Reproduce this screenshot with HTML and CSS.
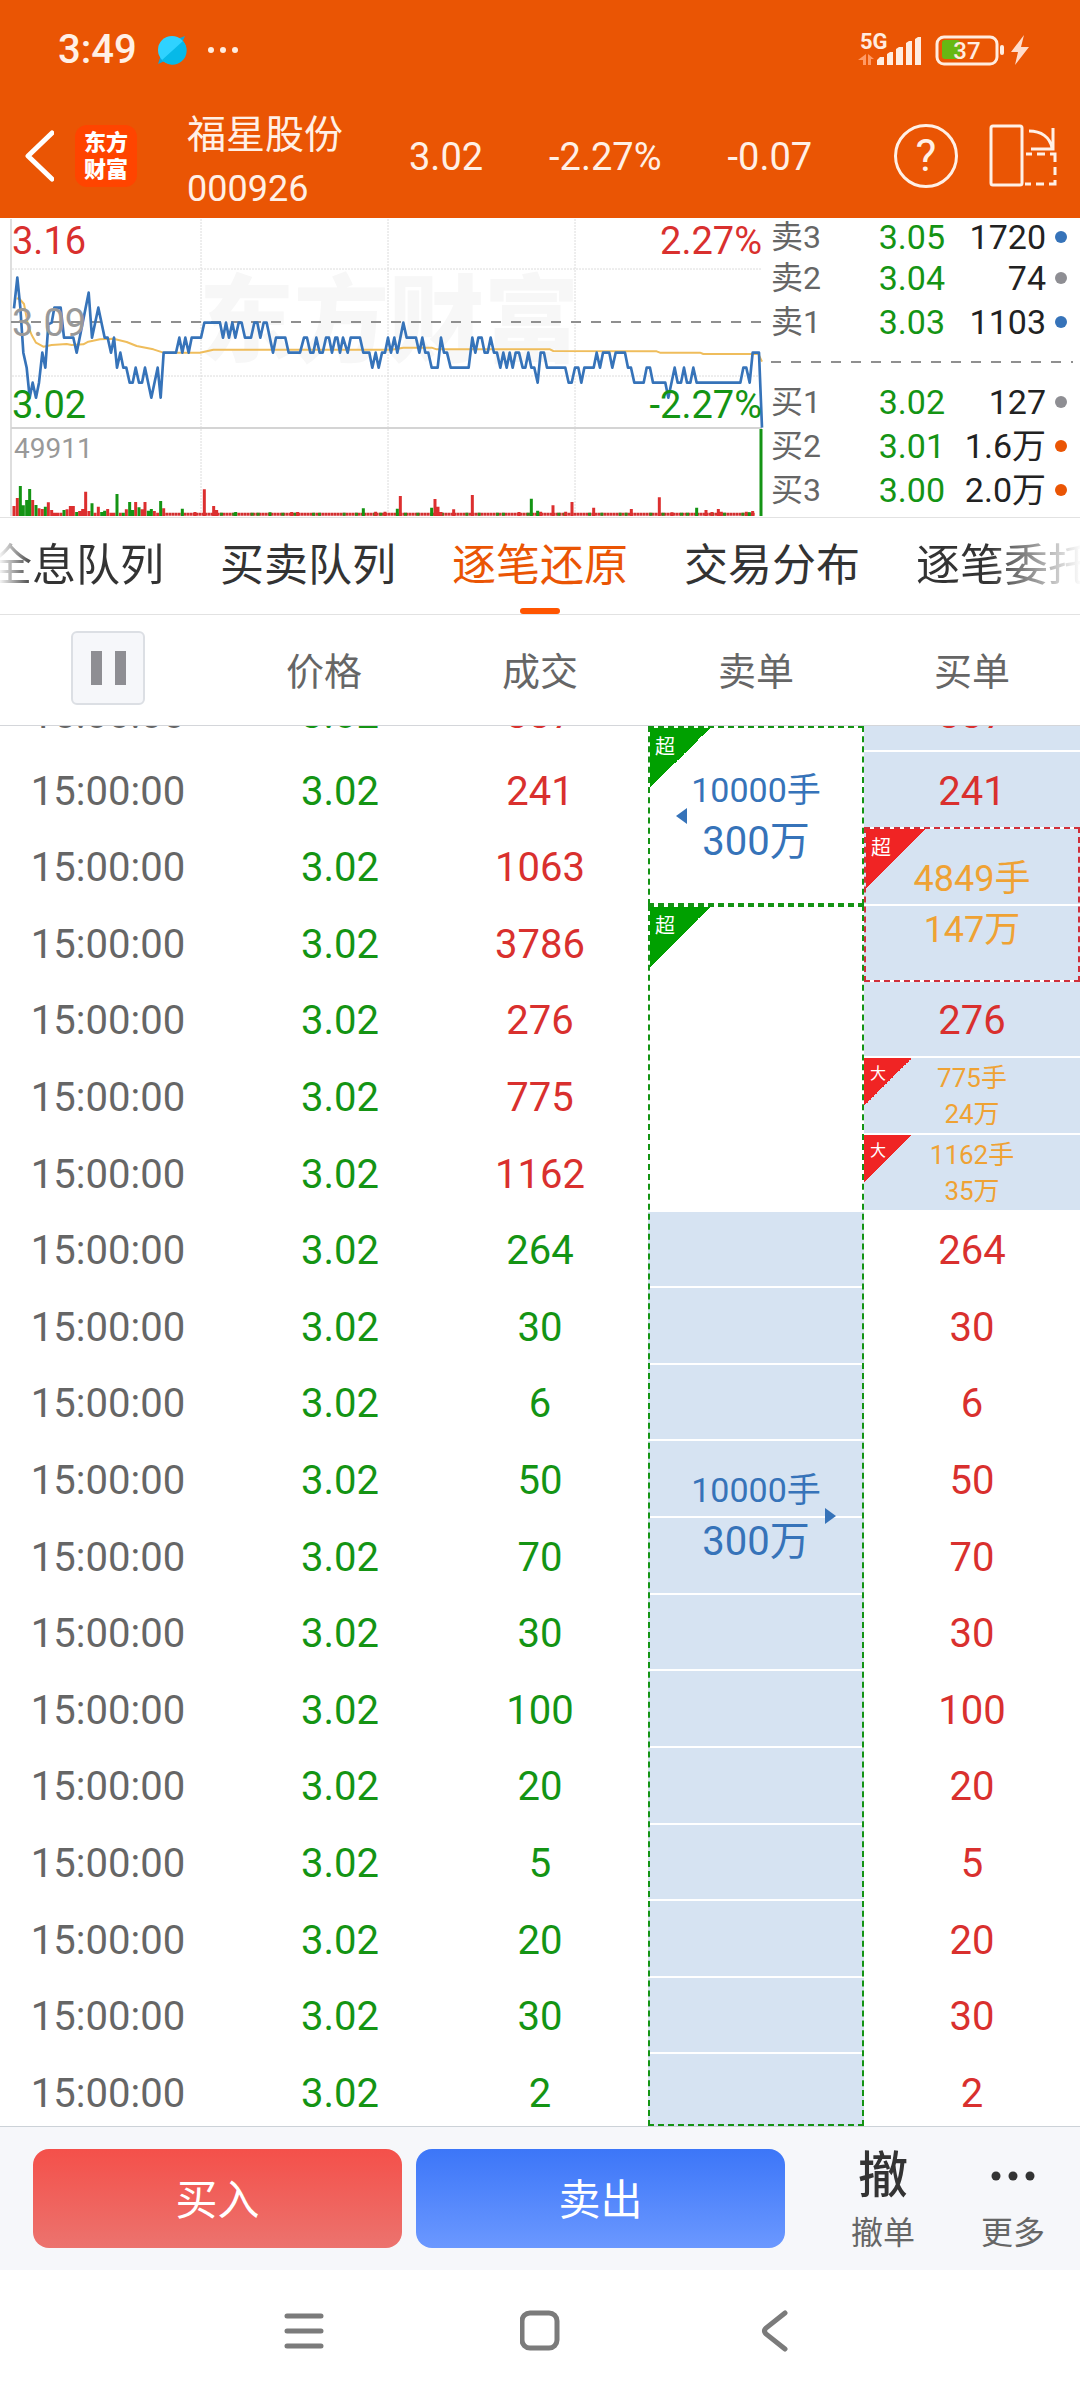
FILE: index.html
```html
<!DOCTYPE html>
<html lang="zh-CN">
<head>
<meta charset="utf-8">
<meta name="viewport" content="width=device-width, initial-scale=1">
<title>福星股份 000926</title>
<link rel="stylesheet" href="styles.css">
</head>
<body>
<div class="page">
  <header class="top">
    <div class="status">
      <span class="clock">3:49</span>
      <svg class="planet" width="30" height="30" viewBox="0 0 30 30" aria-hidden="true">
        <path d="M28 1 24 10 10 25 1 29 4 20 20 4Z" fill="#12a5d8"/>
        <circle cx="15" cy="15" r="14" fill="#2fd2ff"/>
        <path d="M26 6A14 14 0 0 1 5 25Z" fill="#06b9e8"/>
      </svg>
      <svg width="32" height="8" viewBox="0 0 32 8" fill="#ffece0" aria-hidden="true"><circle cx="4" cy="4" r="3"/><circle cx="16" cy="4" r="3"/><circle cx="28" cy="4" r="3"/></svg>
      <svg class="signals" width="174" height="48" viewBox="857 26 174 48" aria-label="5G 37%">
        <text x="860" y="49" class="net">5G</text>
        <g fill="#ff9a66"><path d="M866 54v11h-3v-5h-5zM868 65v-11l6 5h-3v6z"/></g>
        <g fill="#ffece0">
          <path d="M877 65v-5l3-3h4v8zM887 65V54l3-2h3v13zM896 65V49l3-2h4v18zM906 65V43l3-2h3v24zM915 65V39l3-2h3v28z"/>
          <rect x="1000" y="45" width="4" height="10" rx="2"/>
          <path d="M1024 35 1011 52h7l-3 13 14-18h-8z" fill="#ffdccb"/>
        </g>
        <rect x="942" y="40" width="18" height="19" rx="3" fill="#67b813"/>
        <rect x="937" y="37" width="60" height="27" rx="7" fill="none" stroke="#ffece0" stroke-width="3"/>
        <text x="967" y="59" class="level">37</text>
      </svg>
    </div>
    <div class="titlebar">
      <button class="plain back" aria-label="返回"><svg width="30" height="52" viewBox="0 0 30 52"><path d="M28 3 4 26 28 49" fill="none" stroke="#fff" stroke-width="5" stroke-linecap="round" stroke-linejoin="round"/></svg></button>
      <div class="logo"><span>东方</span><span>财富</span></div>
      <h1 class="stock"><span>福星股份</span><span class="code">000926</span></h1>
      <span class="quote">3.02</span>
      <span class="quote">-2.27%</span>
      <span class="quote">-0.07</span>
      <button class="plain help" aria-label="帮助">?</button>
      <button class="plain rotate" aria-label="横屏"><svg width="68" height="64" viewBox="989 124 68 64" fill="none" stroke="#fff0e6" stroke-width="3">
        <rect x="991" y="126" width="31" height="59" rx="2"/>
        <path d="M1029 131c12 0 21 6 23 17M1053 128v21h-22"/>
        <path d="M1026 154h6m5 0h8m5 0h5v8m0 5v8m0 5v4h-6m-5 0h-8m-5 0h-6"/>
      </svg></button>
    </div>
  </header>

  <section class="market">
    <svg class="chart" viewBox="0 0 766 299" role="img" aria-label="分时走势">
      <text x="199" y="137" class="mark">东方财富</text>
      <g stroke="#dcdcdc" stroke-width="1" stroke-dasharray="2 1">
        <path d="M201 1V297M388 1V297M575 1V297M12 51H762M12 158H762"/>
      </g>
      <path d="M11 1V298" stroke="#dedede" stroke-width="2"/>
      <path d="M11 210H762" stroke="#d4d4d4" stroke-width="2"/>
      <path d="M11 104H762" stroke="#8f8f8f" stroke-width="2" stroke-dasharray="10 10"/>
      <text x="12" y="36" class="val up">3.16</text>
      <text x="762" y="36" class="val up end">2.27%</text>
      <g transform="scale(.33333) translate(0 -24)" fill="none" stroke-linejoin="round">
        <path d="M50 265 60 268 72 282 85 350 95 375 108 398 130 410 155 405 200 402 215 405 250 403 265 395 300 388 340 386 380 396 410 408 460 418 490 428 600 428 640 419 1175 419 1210 413 1295 413 1310 418 1650 418 1660 423 1970 424 1980 428 2100 428 2110 432 2275 432 2286 455" stroke="#efbd5c" stroke-width="6"/>
        <path d="M42 295 52 203 61 293 70 428 80 473 89 563 98 518 108 563 117 518 127 428 136 473 145 343 155 338 163 293 182 293 192 383 220 383 230 428 239 383 266 248 276 383 295 293 314 383 323 383 333 428 342 383 351 473 361 428 370 473 379 473 389 518 398 518 407 473 417 518 426 518 435 473 454 563 473 473 482 563 491 428 528 428 538 383 547 428 556 383 566 428 575 383 603 383 613 338 660 338 669 383 678 338 687 383 697 338 706 383 716 338 725 338 735 383 753 383 763 338 772 338 781 383 791 338 800 338 819 428 828 383 856 383 866 428 900 428 912 383 921 383 931 428 940 428 949 383 959 428 968 428 978 383 987 383 996 428 1006 383 1012 383 1020 428 1029 383 1043 428 1052 383 1080 383 1090 428 1108 428 1117 473 1127 428 1136 473 1146 428 1155 428 1164 383 1173 428 1183 383 1192 428 1210 338 1220 383 1248 383 1258 428 1267 383 1276 428 1285 428 1295 473 1313 473 1323 383 1332 428 1341 428 1352 473 1406 473 1417 383 1426 428 1435 383 1445 383 1454 428 1463 428 1472 383 1482 428 1491 428 1501 473 1510 428 1520 473 1529 428 1538 473 1547 428 1557 428 1568 473 1576 473 1585 428 1594 473 1603 473 1613 518 1622 428 1632 428 1641 473 1696 473 1706 518 1715 518 1725 473 1735 473 1744 518 1753 473 1781 473 1790 428 1800 473 1809 428 1828 428 1837 473 1847 428 1875 428 1884 473 1893 473 1903 518 1931 518 1940 473 1950 473 1959 518 1996 518 2005 563 2024 473 2033 518 2043 518 2052 473 2061 518 2071 518 2080 473 2090 518 2221 518 2230 473 2239 473 2249 518 2258 428 2277 428 2286 653" stroke="#3673b9" stroke-width="8"/>
        <path d="M496 913H2264" stroke="#d23030" stroke-width="9" stroke-dasharray="8 1"/>
        <path d="M660 913H2264" stroke="#2c8a1a" stroke-width="9" stroke-dasharray="9 28 9 46 9 9 9 65"/>
        <path d="M42 918V888M52 918V864M98 918V870M117 918V895M127 918V897M145 918V877M155 918V900M164 918V908M173 918V908M183 918V908M201 918V898M211 918V888M220 918V888M239 918V903M248 918V897M257 918V845M267 918V903M285 918V908M295 918V890M323 918V897M333 918V908M342 918V908M361 918V908M379 918V898M407 918V876M426 918V898M435 918V876M463 918V903M473 918V908M491 918V895M585 918V906M613 918V838M641 918V888M650 918V900M875 918V906M893 918V906M1127 918V905M1155 918V905M1201 918V858M1305 918V867M1314 918V890M1323 918V906M1361 918V898M1417 918V855M1557 918V906M1622 918V905M1659 918V886M1697 918V905M1716 918V876M1781 918V893M1894 918V897M1978 918V862M2016 918V907M2118 918V900M2136 918V906M2155 918V897M2164 918V905M2239 918V905M2258 918V903" stroke="#dc2f2f" stroke-width="9"/>
        <path d="M61 918V828M70 918V886M80 918V870M89 918V837M108 918V885M136 918V890M192 918V900M230 918V906M276 918V880M305 918V906M314 918V902M351 918V852M370 918V908M389 918V876M398 918V900M417 918V892M445 918V902M454 918V897M482 918V873M547 918V896M707 918V906M810 918V907M1090 918V895M1192 918V896M1295 918V893M1594 918V866M1613 918V902M2090 918V893M2248 918V907M2283 918V657" stroke="#149414" stroke-width="9"/>
      </g>
      <text x="12" y="118" class="val mid">3.09</text>
      <text x="12" y="200" class="val down">3.02</text>
      <text x="762" y="200" class="val down end">-2.27%</text>
      <text x="14" y="240" class="vol">49911</text>
    </svg>
    <div class="book">
      <div class="level-row"><span>卖3</span><b>3.05</b><em>1720</em><i class="dot blue"></i></div>
      <div class="level-row"><span>卖2</span><b>3.04</b><em>74</em><i class="dot"></i></div>
      <div class="level-row"><span>卖1</span><b>3.03</b><em>1103</em><i class="dot blue"></i></div>
      <div class="split"></div>
      <div class="level-row"><span>买1</span><b>3.02</b><em>127</em><i class="dot"></i></div>
      <div class="level-row"><span>买2</span><b>3.01</b><em>1.6万</em><i class="dot orange"></i></div>
      <div class="level-row"><span>买3</span><b>3.00</b><em>2.0万</em><i class="dot orange"></i></div>
    </div>
  </section>

  <nav class="tabs">
    <a href="#">全息队列</a>
    <a href="#">买卖队列</a>
    <a href="#" class="active" aria-current="page">逐笔还原</a>
    <a href="#">交易分布</a>
    <a href="#">逐笔委托</a>
  </nav>

  <div class="heads">
    <div><button class="pause" aria-label="暂停"></button></div>
    <div>价格</div>
    <div>成交</div>
    <div>卖单</div>
    <div>买单</div>
  </div>

  <main class="ticks">
    <table>
      <tbody>
        <tr><td>15:00:00</td><td class="price">3.02</td><td class="up">337</td>
          <td rowspan="3" class="cell"><div class="order sell first"><span class="tag">超</span><i class="arrow left"></i><span class="narrow">10000手</span><span>300万</span></div></td>
          <td class="up fill">337</td></tr>
        <tr><td>15:00:00</td><td class="price">3.02</td><td class="up">241</td><td class="up fill">241</td></tr>
        <tr><td>15:00:00</td><td class="price">3.02</td><td class="up">1063</td>
          <td rowspan="2" class="cell"><div class="slots"><i class="fill"></i><i class="fill"></i></div><div class="order buy"><span class="tag">超</span><span>4849手</span><span>147万</span></div></td></tr>
        <tr><td>15:00:00</td><td class="price">3.02</td><td class="up">3786</td>
          <td rowspan="16" class="cell"><div class="slots"><i></i><i></i><i></i><i></i><i class="fill"></i><i class="fill"></i><i class="fill"></i><i class="fill"></i><i class="fill"></i><i class="fill"></i><i class="fill"></i><i class="fill"></i><i class="fill"></i><i class="fill"></i><i class="fill"></i><i class="fill"></i></div>
            <div class="order sell last"><span class="tag">超</span><i class="arrow right"></i><span class="narrow">10000手</span><span>300万</span></div></td></tr>
        <tr><td>15:00:00</td><td class="price">3.02</td><td class="up">276</td><td class="up fill">276</td></tr>
        <tr><td>15:00:00</td><td class="price">3.02</td><td class="up">775</td><td class="cell fill"><div class="order small"><span class="tag">大</span><span>775手</span><span>24万</span></div></td></tr>
        <tr><td>15:00:00</td><td class="price">3.02</td><td class="up">1162</td><td class="cell fill"><div class="order small"><span class="tag">大</span><span>1162手</span><span>35万</span></div></td></tr>
        <tr><td>15:00:00</td><td class="price">3.02</td><td class="down">264</td><td class="up">264</td></tr>
        <tr><td>15:00:00</td><td class="price">3.02</td><td class="down">30</td><td class="up">30</td></tr>
        <tr><td>15:00:00</td><td class="price">3.02</td><td class="down">6</td><td class="up">6</td></tr>
        <tr><td>15:00:00</td><td class="price">3.02</td><td class="down">50</td><td class="up">50</td></tr>
        <tr><td>15:00:00</td><td class="price">3.02</td><td class="down">70</td><td class="up">70</td></tr>
        <tr><td>15:00:00</td><td class="price">3.02</td><td class="down">30</td><td class="up">30</td></tr>
        <tr><td>15:00:00</td><td class="price">3.02</td><td class="down">100</td><td class="up">100</td></tr>
        <tr><td>15:00:00</td><td class="price">3.02</td><td class="down">20</td><td class="up">20</td></tr>
        <tr><td>15:00:00</td><td class="price">3.02</td><td class="down">5</td><td class="up">5</td></tr>
        <tr><td>15:00:00</td><td class="price">3.02</td><td class="down">20</td><td class="up">20</td></tr>
        <tr><td>15:00:00</td><td class="price">3.02</td><td class="down">30</td><td class="up">30</td></tr>
        <tr><td>15:00:00</td><td class="price">3.02</td><td class="down">2</td><td class="up">2</td></tr>
      </tbody>
    </table>
  </main>

  <footer class="actions">
    <button class="trade buy-btn">买入</button>
    <button class="trade sell-btn">卖出</button>
    <div class="extras">
      <button class="plain extra"><span class="glyph">撤</span><span>撤单</span></button>
      <button class="plain extra"><span class="glyph"><svg width="44" height="10" viewBox="0 0 44 10" fill="#333" aria-hidden="true"><circle cx="5" cy="5" r="4.5"/><circle cx="22" cy="5" r="4.5"/><circle cx="39" cy="5" r="4.5"/></svg></span><span>更多</span></button>
    </div>
  </footer>

  <nav class="system" aria-label="系统导航">
    <button class="plain" aria-label="最近任务"><svg width="40" height="42" viewBox="0 0 40 42"><path d="M3 6H37M3 21H37M3 36H37" stroke="#7b7b7b" stroke-width="5" stroke-linecap="round"/></svg></button>
    <button class="plain" aria-label="主屏幕"><svg width="40" height="42" viewBox="0 0 40 42"><rect x="2" y="3" width="35" height="35" rx="8" fill="none" stroke="#7b7b7b" stroke-width="5"/></svg></button>
    <button class="plain" aria-label="返回"><svg width="40" height="42" viewBox="0 0 40 42"><path d="M29 3 10 18q-3 3 0 6L29 39" fill="none" stroke="#7b7b7b" stroke-width="5" stroke-linecap="round"/></svg></button>
  </nav>
</div>
</body>
</html>
```
FILE: styles.css
```css
:root {
  --orange: #ea5504;
  --red: #d9302e;
  --green: #149414;
  --blue: #3673b9;
  --fill: #d6e3f2;
  --gray: #666;
}

* { box-sizing: border-box; }

body {
  margin: 0;
  background: #fff;
  color: #333;
  font-family: Roboto, "Noto Sans CJK SC", sans-serif;
}

.page {
  display: flex;
  flex-direction: column;
  min-height: 100vh;
}

button, a { font: inherit; color: inherit; text-decoration: none; }
.plain { padding: 0; border: 0; background: none; display: flex; align-items: center; justify-content: center; }
svg { display: block; }

.up { color: var(--red); fill: var(--red); }
.down { color: var(--green); fill: var(--green); }

/* Status bar and title bar */
.top { background: var(--orange); color: #fff0e6; }

.status {
  display: flex;
  align-items: center;
  height: 94px;
  padding: 6px 49px 0 58px;
}
.clock { font-size: 40px; font-weight: 500; line-height: 48px; }
.planet { margin: 0 20px 0 20px; }
.signals { margin-left: auto; }
.net { font-size: 22px; font-weight: 700; fill: #ffece0; }
.level { font-size: 24px; font-weight: 500; fill: #ffece0; text-anchor: middle; }

.titlebar {
  display: flex;
  align-items: center;
  height: 124px;
  padding: 0 23px 0 24px;
}
.logo {
  display: flex;
  flex-direction: column;
  align-items: center;
  justify-content: center;
  width: 62px;
  height: 62px;
  margin: 0 50px 0 21px;
  border-radius: 12px;
  background: #ff4400;
  color: #fff;
  font-size: 22px;
  font-weight: 900;
  line-height: 27px;
}
.stock {
  display: flex;
  flex-direction: column;
  margin: 0;
  padding-top: 12px;
  font-size: 39px;
  font-weight: 400;
  line-height: 54px;
}
.code { font-size: 36px; }
.quote { margin-left: 66px; padding-top: 2px; font-size: 38px; }
.help {
  width: 64px;
  height: 64px;
  margin: 0 31px 0 auto;
  border: 3px solid #fff0e6;
  border-radius: 50%;
  font-size: 44px;
}

/* Intraday chart and order book */
.market {
  display: grid;
  grid-template-columns: 766fr 314fr;
  border-bottom: 1px solid #e2e2e2;
}
.chart { width: 100%; }
.mark { font-size: 95px; font-weight: 900; fill: #f7f7f7; }
.val { font-size: 38px; }
.mid { fill: #999; }
.vol { font-size: 28px; fill: #999; }
.end { text-anchor: end; }

.book {
  display: grid;
  grid-template-rows: 38fr 44fr 44fr 36fr 44fr 44fr 44fr 5fr;
  padding: 0 13px 0 5px;
  font-size: 34px;
  line-height: 38px;
}
.level-row {
  display: grid;
  grid-template-columns: 60px 1fr 110px 12px;
  align-items: center;
}
.level-row span { color: var(--gray); font-size: 32px; }
.level-row b { color: var(--green); font-weight: 400; text-align: right; }
.level-row em { color: #222; font-style: normal; text-align: right; padding-right: 9px; }
.dot { width: 12px; height: 12px; border-radius: 50%; background: #8e8e93; }
.dot.blue { background: var(--blue); }
.dot.orange { background: var(--orange); }
.split {
  align-self: center;
  height: 2px;
  margin-right: -6px;
  background: repeating-linear-gradient(90deg, #8f8f8f 0 10px, transparent 10px 20px);
}

/* Tabs */
.tabs {
  display: flex;
  justify-content: center;
  gap: 56px;
  height: 97px;
  overflow: hidden;
  border-bottom: 1px solid #e2e2e2;
  font-size: 44px;
  line-height: 96px;
  white-space: nowrap;
}
.tabs a { flex: none; position: relative; }
.tabs a:first-child {
  background: linear-gradient(90deg, #fff 10px, #333 46px);
  background-clip: text;
  color: transparent;
}
.tabs a:last-child {
  background: linear-gradient(90deg, #333 72px, #fff 166px);
  background-clip: text;
  color: transparent;
}
.tabs .active { color: var(--orange); }
.tabs .active::after {
  content: "";
  position: absolute;
  left: 50%;
  bottom: 0;
  width: 40px;
  height: 6px;
  margin-left: -20px;
  border-radius: 3px;
  background: #ff5500;
}

/* Column heads */
.heads {
  display: grid;
  grid-template-columns: repeat(5, 1fr);
  align-items: center;
  justify-items: center;
  height: 111px;
  padding-bottom: 4px;
  border-bottom: 1px solid #d4d6da;
  color: var(--gray);
  font-size: 38px;
}
.pause {
  display: block;
  width: 74px;
  height: 74px;
  padding: 0;
  border: 2px solid #dcdfe4;
  border-radius: 6px;
  background: linear-gradient(90deg, #8e8e93 0 11px, transparent 11px 24px, #8e8e93 24px) center / 35px 34px no-repeat #f6f7fa;
}

/* Tick list, scrolled part-way into its first row */
.ticks { overflow: hidden; }
.ticks table {
  width: 100%;
  margin: -51px 0 -5px;
  border-spacing: 0;
  table-layout: fixed;
  font-size: 40px;
  line-height: 50px;
  text-align: center;
}
.ticks tr { height: 77px; }
.ticks tr:nth-child(5n), .ticks tr:nth-child(5n+3) { height: 76px; }
.ticks td { padding: 2px 0 0; }
.ticks td:first-child { color: var(--gray); }
.ticks .price { padding-left: 32px; color: var(--green); }
.fill { background: var(--fill); }
.ticks .fill { border-bottom: 2px solid #fff; }
.ticks td.fill { padding-top: 4px; }

.cell { position: relative; }
.slots { position: absolute; inset: 0; display: flex; flex-direction: column; }
.slots i { flex: 1; border-bottom: 2px solid #fff; }

.order {
  position: absolute;
  inset: 0;
  display: flex;
  flex-direction: column;
  align-items: center;
  justify-content: center;
}
.order.sell { border: 2px dashed #149414; color: var(--blue); line-height: 51px; }
.order.first { top: 51px; }
.order.last { bottom: 5px; }
.order.buy { top: -2px; border: 2px dashed #d0303a; color: #efa234; font-size: 36px; line-height: 51px; }
.order.small { color: #efa234; font-size: 26px; line-height: 36px; }
.narrow { font-size: 34px; }

.tag {
  position: absolute;
  left: 0;
  top: 0;
  width: 60px;
  height: 60px;
  padding: 1px 0 0 5px;
  background: linear-gradient(135deg, #00a000 50%, transparent 50%);
  color: #fff;
  font-size: 20px;
  line-height: 36px;
  text-align: left;
}
.buy .tag { background: linear-gradient(135deg, #f02424 50%, transparent 50%); }
.small .tag {
  width: 48px;
  height: 48px;
  padding: 0 0 0 6px;
  background: linear-gradient(135deg, #f02424 50%, transparent 50%);
  font-size: 16px;
  line-height: 32px;
}
.arrow { position: absolute; top: 50%; margin-top: -8px; border: 8px solid transparent; }
.arrow.left { left: 26px; border-left: 0; border-right: 11px solid var(--blue); }
.arrow.right { right: 26px; border-right: 0; border-left: 11px solid var(--blue); }

/* Trade actions */
.actions {
  display: flex;
  align-items: center;
  gap: 14px;
  height: 144px;
  padding: 0 2px 0 33px;
  border-top: 1px solid #ccd2d8;
  background: #f6f7fa;
}
.trade {
  flex: 1;
  height: 99px;
  padding: 0 0 4px;
  border: 0;
  border-radius: 16px;
  color: #fff;
  font-size: 42px;
}
.buy-btn { background: linear-gradient(#f4504a, #ec736e); }
.sell-btn { background: linear-gradient(#3c76f8, #6b98ff); }
.extras { display: flex; margin-left: 19px; }
.extra {
  flex-direction: column;
  gap: 6px;
  width: 130px;
  color: var(--gray);
  font-size: 32px;
  line-height: 40px;
}
.glyph {
  display: flex;
  align-items: center;
  height: 62px;
  color: #333;
  font-size: 50px;
  font-weight: 500;
}

/* System navigation */
.system {
  display: flex;
  align-items: center;
  justify-content: center;
  gap: 196px;
  height: 130px;
  padding-bottom: 8px;
}
```
